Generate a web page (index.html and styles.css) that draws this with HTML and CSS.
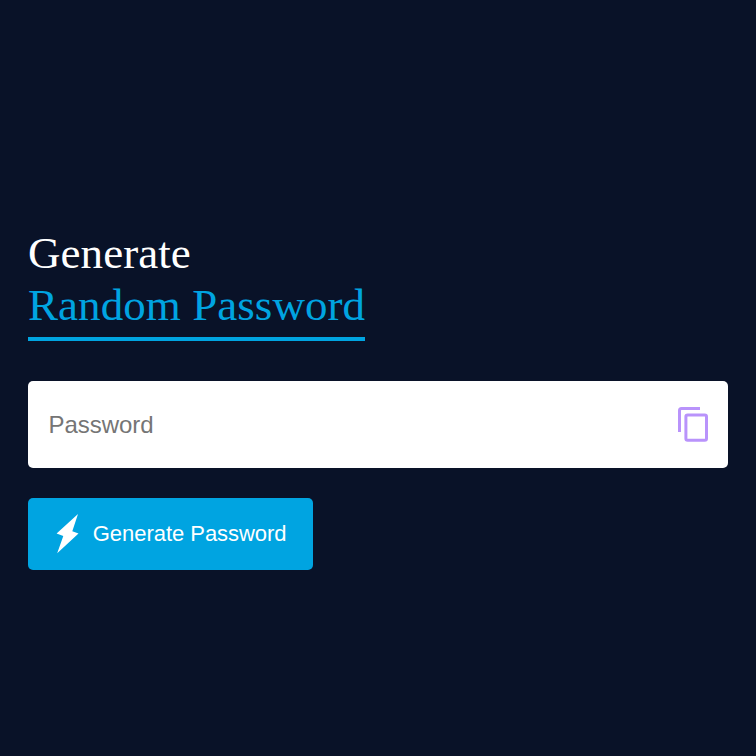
FILE: index.html
```html
<!DOCTYPE html>
<html lang="en">
<head>
<meta charset="utf-8">
<title>Random Password Generator</title>
<link rel="stylesheet" href="styles.css">
</head>
<body>
<main class="container">
<h1>Generate<br><span>Random Password</span></h1>
<div class="display">
<input type="text" placeholder="Password">
<svg class="copy" viewBox="0 0 30 35" fill="none" stroke="#b993fb" stroke-width="3"><path d="M1.500 25V3.500Q1.500 1.500 3.500 1.500H22"/><rect x="7.900" y="8" width="20.600" height="25.300" rx="1.800"/></svg>
</div>
<button type="button"><svg class="bolt" viewBox="0 0 23 40"><path d="M22 0L.6 19.600L7.300 22L1.200 39.200L22.500 19.600L16.300 17.200Z" fill="#fff"/></svg>Generate Password</button>
</main>
</body>
</html>
```
FILE: styles.css
```css
* { margin: 0; padding: 0; box-sizing: border-box; }
body { background: #091228; color: #fff; }
.container { margin: 227px 28px 0; }
h1 { font: 400 45px/52px "Liberation Serif", serif; letter-spacing: .06px; }
h1 span { display: inline-block; height: 62px; color: #00a4e1; border-bottom: 4px solid #00a4e1; }
.display { display: flex; align-items: center; justify-content: space-between; height: 87px; margin: 40px 0 30px; padding: 0 20px 0 20.500px; background: #fff; border-radius: 5px; }
input { flex: 1; min-width: 0; border: 0; outline: 0; font: 24px "Liberation Sans", sans-serif; letter-spacing: -.05px; }
.copy { width: 30px; height: 35px; }
button { display: flex; align-items: center; width: 285px; height: 72px; padding-left: 28px; border: 0; border-radius: 5px; background: #00a4e1; color: #fff; font: 22px "Liberation Sans", sans-serif; letter-spacing: -.04px; }
.bolt { width: 23px; height: 40px; margin-right: 13.800px; }
```
